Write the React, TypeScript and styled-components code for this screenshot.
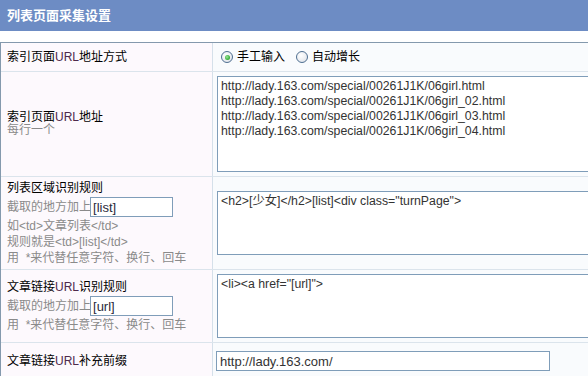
import React from "react";
import styled, { createGlobalStyle, css } from "styled-components";

const Global = createGlobalStyle`
  html, body { margin: 0; padding: 0; background: #fff; overflow: hidden; }
  body {
    font-family: "Liberation Sans", "Noto Sans CJK SC", sans-serif;
    font-size: 12px;
    color: #000;
  }
`;

const Page = styled.div`
  width: 700px;
`;

const Header = styled.div`
  height: 31px;
  background: #6d8cc4;
  color: #fff;
  font-weight: bold;
  font-size: 13px;
  line-height: 31px;
  padding-left: 7px;
`;

const Table = styled.div`
  margin-top: 11px;
  border-top: 1px solid #8499ad;
  border-left: 1px solid #8499ad;
`;

const Row = styled.div`
  display: grid;
  grid-template-columns: 212px 1fr;
  border-bottom: 1px solid #dbe4ec;
`;

const LabelCell = styled.div<{ $lh?: number }>`
  box-sizing: border-box;
  border-right: 1px solid #d5e0ea;
  background: #fdf9fd;
  padding: 3px 6px;
  display: flex;
  flex-direction: column;
  justify-content: center;
  line-height: ${(p) => p.$lh ?? 16}px;
`;

const ValueCell = styled.div<{ $pad?: string }>`
  background: #f9fbfd;
  padding: ${(p) => p.$pad ?? "4px 4px"};
  display: flex;
  align-items: center;
`;

const Title = styled.div`
  color: #000;
  white-space: nowrap;
`;

const Latin = styled.span`
  color: #4e2a4c;
`;

const Hint = styled.div<{ $withInput?: boolean }>`
  color: #8a8a8a;
  white-space: pre;
  display: flex;
  align-items: center;
  ${(p) =>
    p.$withInput &&
    css`
      height: 22px;
    `}
`;

const InlineInput = styled.input`
  width: 83px;
  height: 20px;
  box-sizing: border-box;
  border: 1px solid #7f9db9;
  font-family: "Liberation Sans", sans-serif;
  font-size: 13px;
  padding: 0 2px;
  margin: 0 0 0 -1px;
  color: #2a2a3a;
  background: #fff;
  outline: none;
`;

const Area = styled.textarea<{ $h: number }>`
  display: block;
  box-sizing: border-box;
  width: 460px;
  height: ${(p) => p.$h}px;
  border: 1px solid #7f9db9;
  background: #fff;
  font-family: "Liberation Sans", "Noto Sans CJK SC", sans-serif;
  font-size: 12.3px;
  line-height: 15px;
  color: #333;
  padding: 2px 3px;
  margin: 0;
  resize: none;
  overflow: hidden;
  outline: none;
`;

const TextInput = styled.input`
  box-sizing: border-box;
  width: 334px;
  height: 20px;
  border: 1px solid #7f9db9;
  background: #fff;
  font-family: "Liberation Sans", sans-serif;
  font-size: 13px;
  color: #333;
  padding: 0 3px;
  margin: 0 0 0 -1px;
  outline: none;
`;

const RadioGroup = styled.div`
  display: flex;
  align-items: center;
  padding-left: 4px;
`;

const RadioItem = styled.label`
  display: flex;
  align-items: center;
  margin-right: 11px;
  line-height: 16px;
  color: #000;
`;

const Radio = styled.span<{ $checked?: boolean }>`
  position: relative;
  display: inline-block;
  width: 12px;
  height: 12px;
  box-sizing: border-box;
  border-radius: 50%;
  border: 1px solid #4f6f91;
  background: radial-gradient(circle at 40% 35%, #ffffff 0%, #e6e9ee 70%, #d2d7de 100%);
  margin-right: 4px;
  ${(p) =>
    p.$checked &&
    css`
      &::after {
        content: "";
        position: absolute;
        left: 2.5px;
        top: 2.5px;
        width: 5px;
        height: 5px;
        border-radius: 50%;
        background: radial-gradient(circle at 40% 40%, #9be59b 0%, #3fb33f 60%, #1f8f1f 100%);
      }
    `}
`;

const urls = [
  "http://lady.163.com/special/00261J1K/06girl.html",
  "http://lady.163.com/special/00261J1K/06girl_02.html",
  "http://lady.163.com/special/00261J1K/06girl_03.html",
  "http://lady.163.com/special/00261J1K/06girl_04.html",
].join("\n");

export default function App() {
  return (
    <Page>
      <Global />
      <Header>列表页面采集设置</Header>
      <Table>
        <Row>
          <LabelCell style={{ height: 28 }}>
            <Title>
              索引页面<Latin>URL</Latin>地址方式
            </Title>
          </LabelCell>
          <ValueCell>
            <RadioGroup>
              <RadioItem>
                <Radio $checked />
                手工输入
              </RadioItem>
              <RadioItem>
                <Radio />
                自动增长
              </RadioItem>
            </RadioGroup>
          </ValueCell>
        </Row>
        <Row>
          <LabelCell $lh={13}>
            <Title>
              索引页面<Latin>URL</Latin>地址
            </Title>
            <Hint>每行一个</Hint>
          </LabelCell>
          <ValueCell>
            <Area $h={96} readOnly value={urls} />
          </ValueCell>
        </Row>
        <Row>
          <LabelCell>
            <Title>列表区域识别规则</Title>
            <Hint $withInput>
              截取的地方加上
              <InlineInput readOnly value="[list]" />
            </Hint>
            <Hint>{"如<td>文章列表</td>"}</Hint>
            <Hint>{"规则就是<td>[list]</td>"}</Hint>
            <Hint>{"用  *来代替任意字符、换行、回车"}</Hint>
          </LabelCell>
          <ValueCell>
            <Area $h={64} readOnly value={'<h2>[少女]</h2>[list]<div class="turnPage">'} />
          </ValueCell>
        </Row>
        <Row>
          <LabelCell>
            <Title>
              文章链接<Latin>URL</Latin>识别规则
            </Title>
            <Hint $withInput>
              截取的地方加上
              <InlineInput readOnly value="[url]" />
            </Hint>
            <Hint>{"用  *来代替任意字符、换行、回车"}</Hint>
          </LabelCell>
          <ValueCell>
            <Area $h={64} readOnly value={'<li><a href="[url]">'} />
          </ValueCell>
        </Row>
        <Row>
          <LabelCell>
            <Title>
              文章链接<Latin>URL</Latin>补充前缀
            </Title>
          </LabelCell>
          <ValueCell $pad="8px 4px">
            <TextInput readOnly value="http://lady.163.com/" />
          </ValueCell>
        </Row>
      </Table>
    </Page>
  );
}
